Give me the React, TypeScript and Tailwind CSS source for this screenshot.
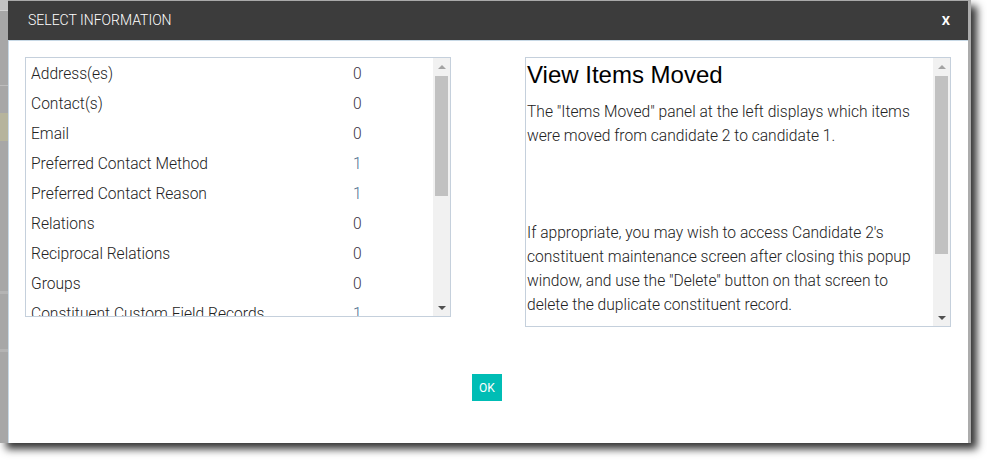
import React from "react";

const ITEMS = [
  { label: "Address(es)", count: 0 },
  { label: "Contact(s)", count: 0 },
  { label: "Email", count: 0 },
  { label: "Preferred Contact Method", count: 1 },
  { label: "Preferred Contact Reason", count: 1 },
  { label: "Relations", count: 0 },
  { label: "Reciprocal Relations", count: 0 },
  { label: "Groups", count: 0 },
  { label: "Constituent Custom Field Records", count: 1 },
];

function FakeScrollbar({ thumb }: { thumb: string }) {
  return (
    <div className="flex w-[17px] shrink-0 flex-col bg-[#f1f1f1]">
      <div className="flex h-[17px] items-center justify-center">
        <div className="h-0 w-0 border-x-[4px] border-b-[4px] border-x-transparent border-b-[#a3a3a3]" />
      </div>
      <div className="flex-1 px-[2px]">
        <div className={`w-full bg-[#c1c1c1] ${thumb}`} />
      </div>
      <div className="flex h-[17px] items-center justify-center">
        <div className="h-0 w-0 border-x-[4px] border-t-[4px] border-x-transparent border-t-[#505050]" />
      </div>
    </div>
  );
}

export default function App() {
  return (
    <div className="h-[460px] w-[987px] overflow-hidden bg-white font-['Roboto',sans-serif]">
      <div className="flex h-[443px] w-[971px] shadow-[6px_6px_8px_rgba(0,0,0,0.8)]">
        {/* page behind the dialog */}
        <div className="flex w-[8px] shrink-0 flex-col bg-[#a7a7a7]">
          <div className="h-[10px] bg-[#c2c2c2]" />
          <div className="h-px bg-[#d4d4d4]" />
          <div className="h-[74px]" />
          <div className="h-px bg-[#bdbdbd]" />
          <div className="h-[27px]" />
          <div className="h-[28px] bg-[#b6b49c]" />
          <div className="h-[150px]" />
          <div className="h-[3px] bg-[#b4b4b4]" />
          <div className="h-[55px]" />
          <div className="h-[3px] bg-[#b4b4b4]" />
        </div>

        {/* dialog */}
        <div className="flex w-[963px] flex-col border-t border-r-[3px] border-t-[#a9a9a9] border-r-[#acacac] bg-white">
          <div className="flex h-[39px] shrink-0 items-center justify-between bg-[#3c3c3c] pl-[20px] pr-[18px] text-white">
            <span className="text-[14px] font-light">SELECT INFORMATION</span>
            <span className="text-[13px] font-bold">X</span>
          </div>
          <div className="flex flex-1 flex-col border-t border-l border-[#c8d9e6] pt-[16px] pl-[16px] pr-[17px]">
            <div className="flex items-start justify-between">
              {/* items moved list */}
              <div className="flex h-[260px] w-[426px] border border-[#c5d0dc]">
                <div className="flex-1 overflow-hidden pt-[2px]">
                  {ITEMS.map((it) => (
                    <div key={it.label} className="flex h-[30px] shrink-0 items-center pl-[5px] text-[15.6px] font-light text-[#222]">
                      <span className="w-[322px]">{it.label}</span>
                      <span className={it.count ? "text-[#4f6f90]" : "text-[#3a3344]"}>{it.count}</span>
                    </div>
                  ))}
                </div>
                <FakeScrollbar thumb="mt-[1px] h-[120px]" />
              </div>

              {/* help text */}
              <div className="flex h-[270px] w-[426px] border border-[#c5d0dc]">
                <div className="flex-1 overflow-hidden pl-px pr-2 text-[#222]">
                  <h2 className="mt-[4px] font-['Liberation_Sans',Arial,sans-serif] text-[24px] leading-[26px] text-black">
                    View Items Moved
                  </h2>
                  <p className="mt-[12px] text-[15.6px] font-light leading-[24px]">
                    The "Items Moved" panel at the left displays which items were moved from candidate 2 to candidate 1.
                  </p>
                  <p className="mt-[73px] text-[15.6px] font-light leading-[24px]">
                    If appropriate, you may wish to access Candidate 2's constituent maintenance screen after closing this popup window, and use the "Delete" button on that screen to delete the duplicate constituent record.
                  </p>
                </div>
                <FakeScrollbar thumb="mt-[1px] h-[178px]" />
              </div>
            </div>

            <div className="mt-[47px] flex justify-center pr-[2px]">
              <button className="flex h-[27px] w-[30px] items-center justify-center bg-[#00bdb5] text-[12px] text-white">
                OK
              </button>
            </div>
          </div>
        </div>
      </div>
    </div>
  );
}
